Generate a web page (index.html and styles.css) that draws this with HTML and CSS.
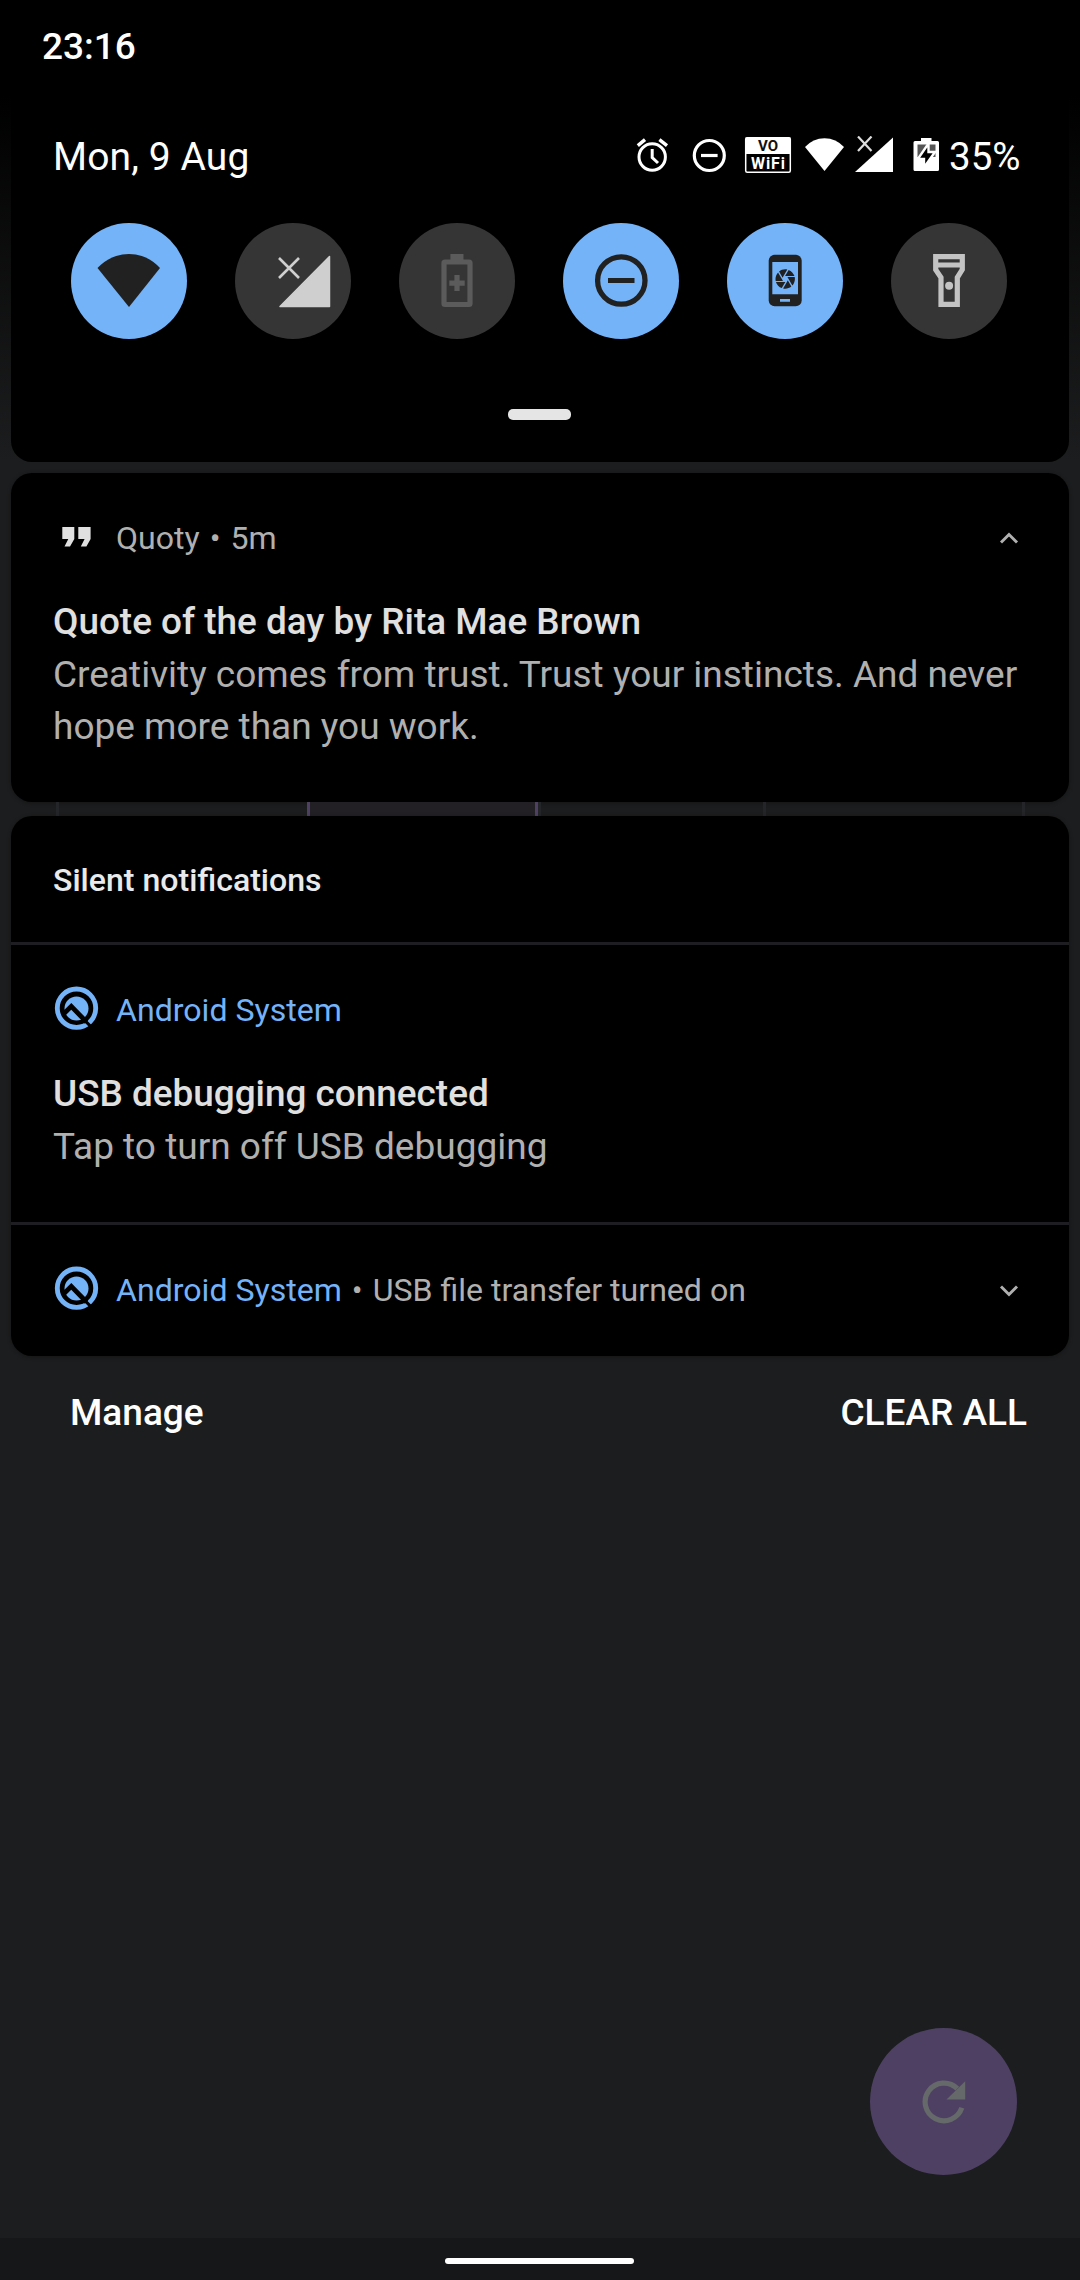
FILE: index.html
```html
<!DOCTYPE html>
<html lang="en">
<head>
<meta charset="utf-8">
<title>Notification shade</title>
<link rel="stylesheet" href="styles.css">
</head>
<body>
<svg class="defs" width="0" height="0">
  <symbol id="android-q" viewBox="0 0 44 46" overflow="visible">
    <circle cx="23.5" cy="21.2" r="19.2" fill="none" stroke="currentColor" stroke-width="4.900"/>
    <circle cx="23.5" cy="21.4" r="12" fill="currentColor"/>
    <path d="M10 27.500L18.300 19.300L33.500 35" fill="none" stroke="#000" stroke-width="4.800"/>
    <path d="M32 33.600L41.500 43.400" stroke="#000" stroke-width="3"/>
  </symbol>
</svg>
<div class="screen">
  <header class="status-bar"><span class="clock">23:16</span></header>

  <section class="quick-settings">
    <div class="qs-header">
      <span class="date">Mon, 9 Aug</span>
      <svg class="status-icons" width="304" height="40" viewBox="636 136 304 40">
        <g fill="none" stroke="#fff">
          <circle cx="652.2" cy="157" r="13.2" stroke-width="3"/>
          <path d="M652.2 149V157.500L658 163" stroke-width="3"/>
          <path d="M637.800 145.600L645 139.600M659.400 139.600L667 145.600" stroke-width="3.400"/>
          <circle cx="709.300" cy="155.500" r="15" stroke-width="3.200"/>
          <path d="M701 155.500H717.600" stroke-width="3.200"/>
        </g>
        <rect x="745.700" y="137.700" width="44.600" height="34.600" rx="1.500" fill="#000" stroke="#fff" stroke-width="1.500"/>
        <path d="M745.600 137.600H790.400V154H745.600Z" fill="#fff"/>
        <text class="vo" x="768" y="151.300" textLength="20">VO</text>
        <text class="wifi-label" x="768" y="169.200" textLength="34">WiFi</text>
        <path d="M824.500 171L805 147Q813 138.200 824.500 138.200Q836 138.200 844 147Z" fill="#fff"/>
        <path d="M858 136.500L871.500 151M871.500 136.500L858 151" stroke="#ddd" stroke-width="2.200"/>
        <path d="M855 172H893V137.500Z" fill="#fff"/>
        <path d="M921 138H931.500V141H937.500Q939 141 939 142.500V169.500Q939 171 937.500 171H915Q913.500 171 913.500 169.500V142.500Q913.500 141 915 141H921Z" fill="#fff"/>
        <path d="M917.500 144.500H935.500V157H917.500Z" fill="#555"/>
        <path d="M928.500 143.500L917.800 159H924V167.500L935 152H928.500Z" fill="#000" stroke="#fff" stroke-width="2.400"/>
      </svg>
      <span class="battery-level">35%</span>
    </div>

    <div class="tiles">
      <svg class="tile on" viewBox="71 223 116 116"><path d="M129 307L97.500 268Q111 254 129 254Q147 254 160 268Z" fill="#212121"/></svg>
      <svg class="tile" viewBox="235 223 116 116">
        <path d="M280 306.500L329.500 306.500V256.500Z" fill="#cfcfcf" stroke="#cfcfcf" stroke-width="1.500" stroke-linejoin="round"/>
        <path d="M279 258L299 278M299 258L279 278" stroke="#cfcfcf" stroke-width="2.600"/>
      </svg>
      <svg class="tile" viewBox="399 223 116 116">
        <rect x="444" y="262" width="26" height="42.500" rx="1" fill="none" stroke="#5b5b5b" stroke-width="5.200"/>
        <path d="M450.400 254H463.500V260H450.400ZM454.400 275H459.600V280.500H464.700V285.800H459.600V291H454.400V285.800H449.300V280.500H454.400Z" fill="#5b5b5b"/>
      </svg>
      <svg class="tile on" viewBox="563 223 116 116">
        <circle cx="621.300" cy="280.500" r="23.700" fill="none" stroke="#212121" stroke-width="5.300"/>
        <path d="M608 280.500H634.500" stroke="#212121" stroke-width="5.200"/>
      </svg>
      <svg class="tile on" viewBox="727 223 116 116">
        <rect x="768.700" y="254.700" width="33" height="51.600" rx="6" fill="#212121"/>
        <path d="M772.300 262H798V294.300H772.300ZM780 299H790V301.800H780Z" fill="#74b3f8"/>
        <path transform="translate(785.200 279) scale(.97) translate(-12 -12)" fill="#212121" d="M9.400 10.500l4.770-8.260C13.470 2.090 12.750 2 12 2c-2.400 0-4.600.85-6.320 2.250l3.660 6.350.06-.1zM21.540 9c-.92-2.920-3.150-5.260-6-6.340L11.880 9h9.660zm.26 1h-7.490l.29.5 4.760 8.250C21 16.970 22 14.610 22 12c0-.69-.07-1.350-.2-2zM8.540 12l-3.900-6.750C3.010 7.030 2 9.390 2 12c0 .69.07 1.350.2 2h7.490l-1.150-2zm-6.080 3c.92 2.920 3.150 5.260 6 6.340L12.120 15H2.460zm11.270 0l-3.900 6.760c.7.15 1.420.24 2.170.24 2.400 0 4.600-.85 6.320-2.250l-3.660-6.350-.93 1.600z"/>
      </svg>
      <svg class="tile" viewBox="891 223 116 116">
        <path d="M935.700 256.600H962.300V269.600L957.300 277.500V304.300H941V277.500L935.700 269.600Z" fill="none" stroke="#c3c3c3" stroke-width="5.200"/>
        <path d="M936 265H962" stroke="#c3c3c3" stroke-width="5.200"/>
        <circle cx="949.100" cy="285.700" r="4" fill="#c3c3c3"/>
      </svg>
    </div>
    <div class="drag-handle"></div>
  </section>

  <article class="card quote">
    <div class="row">
      <svg class="app-icon" viewBox="0 0 44 46"><path d="M9.300 12H21.300V24L17 31.500H11.500L15.300 24H9.300ZM25.300 12H37.600V24L33.400 31.500H27.800L31.600 24H25.300Z" fill="#e0e0e0"/></svg>
      <span class="app">Quoty</span><span class="dot">•</span><span class="app">5m</span>
      <svg class="chevron" viewBox="0 0 20 14"><path d="M2 11.500L10 3.500L18 11.500" fill="none" stroke="#b0b0b0" stroke-width="2.900"/></svg>
    </div>
    <h2 class="title">Quote of the day by Rita Mae Brown</h2>
    <p class="text">Creativity comes from trust. Trust your instincts. And never hope more than you work.</p>
  </article>

  <div class="calendar-strip"><i></i><i class="today"></i><i></i><i></i></div>

  <section class="card silent">
    <h3 class="silent-title">Silent notifications</h3>
    <article class="usb">
      <div class="row">
        <svg class="app-icon system"><use href="#android-q"/></svg>
        <span class="app system">Android System</span>
      </div>
      <h2 class="title">USB debugging connected</h2>
      <p class="text">Tap to turn off USB debugging</p>
    </article>
    <article class="transfer">
      <div class="row">
        <svg class="app-icon system"><use href="#android-q"/></svg>
        <span class="app system">Android System</span><span class="dot">•</span><span class="app">USB file transfer turned on</span>
        <svg class="chevron" viewBox="0 0 20 14"><path d="M2 3.500L10 11.500L18 3.500" fill="none" stroke="#b0b0b0" stroke-width="2.900"/></svg>
      </div>
    </article>
  </section>

  <footer class="actions"><span>Manage</span><span>CLEAR ALL</span></footer>

  <div class="fab">
    <svg width="44" height="44" viewBox="0 0 44 44"><path d="M35.300 8.700A18.800 18.800 0 1 0 39.800 27.800" fill="none" stroke="#656969" stroke-width="5.200"/><path d="M43.200 1.200V19.500H24.500Z" fill="#656969"/></svg>
  </div>

  <nav class="nav-bar"><div class="nav-handle"></div></nav>
</div>
</body>
</html>
```
FILE: styles.css
```css
* { box-sizing: border-box; margin: 0; padding: 0; }
body { background: #1c1d1e; font-family: Roboto, "Liberation Sans", sans-serif; }
.defs { display: block; height: 0; }
.screen {
  width: 1080px; height: 2280px; overflow: hidden;
  display: flex; flex-direction: column;
  background: linear-gradient(#000 0, #000 95px, #1c1d1e 460px, #1c1d1e 100%);
}
.status-bar { height: 92px; padding: 25px 42px 0; }
.clock { display: block; font-size: 37px; line-height: 44px; font-weight: 500; color: #fff; }
.quick-settings {
  height: 370px; margin: 0 11px; background: #000; border-radius: 0 0 21px 21px;
  display: flex; flex-direction: column; align-items: flex-start;
}
.qs-header { display: flex; align-items: center; align-self: stretch; height: 40px; margin-top: 44px; padding: 0 48px 0 42px; color: #fff; line-height: 40px; }
.date { font-size: 39px; padding-top: 1px; letter-spacing: .1px; }
.battery-level { font-size: 38.500px; padding-top: 1px; width: 72px; }
.status-icons { flex: none; margin-left: auto; margin-right: 9px; }
.vo, .wifi-label { font-size: 15px; font-weight: 700; fill: #111; text-anchor: middle; }
.wifi-label { font-size: 16px; fill: #fff; }
.tiles { display: flex; gap: 48px; margin: 47px 0 0 60px; }
.tile { width: 116px; height: 116px; border-radius: 50%; background: #353535; }
.tile.on { background: #74b3f8; }
.drag-handle { width: 63px; height: 11px; border-radius: 5px; background: #e5e5e5; margin: 70px 0 0 497px; }
.card { margin: 0 11px; background: #000; border-radius: 21px; box-shadow: 0 1px 4px rgba(0,0,0,.3); }
.quote { margin-top: 11px; height: 329px; padding: 42px 42px 0; }
.row { display: flex; align-items: center; height: 46px; }
.app-icon { width: 44px; height: 46px; margin-right: 19px; overflow: visible; }
.app, .dot { font-size: 32.100px; line-height: 46px; color: #b0b0b0; white-space: pre; }
.dot { margin: 0 10px; }
.app.system, .app-icon.system { color: #74b3f8; }
.chevron { width: 20px; height: 14px; margin-left: auto; margin-right: 8px; }
.title { font-size: 36.900px; line-height: 52.500px; font-weight: 500; color: #e0e0e0; }
.text { font-size: 37px; line-height: 52.500px; color: #b0b0b0; white-space: nowrap; }
.quote .text { white-space: normal; }
.quote .title, .usb .title { margin-top: 35px; }
.calendar-strip { height: 14px; margin: 0 55px 0 56px; display: grid; grid-template-columns: 251px 231px 225px 1fr; }
.calendar-strip i { border-left: 3px solid #242528; }
.calendar-strip i:last-child { border-right: 3px solid #242528; }
.calendar-strip .today { border-left: 3px solid #4e4063; border-right: 3px solid #4e4063; background: #222025; }
.silent { height: 540px; }
.silent-title { height: 126px; padding-left: 42px; font-size: 32.100px; line-height: 128px; font-weight: 500; color: #e8eaed; }
.usb { height: 280px; border-top: 3px solid #1e1d21; padding: 42px 42px 0; }
.transfer { border-top: 3px solid #1e1d21; padding: 42px 42px 0; }
.actions { display: flex; justify-content: space-between; padding: 35px 53px 0 70px; font-size: 37px; line-height: 44px; font-weight: 500; color: #fff; }
.fab { width: 147px; height: 147px; border-radius: 50%; background: #4e4063; margin: auto 63px 63px auto; display: flex; align-items: center; justify-content: center; flex: none; }
.nav-bar { flex: none; height: 42px; background: #161718; padding: 20px 0 0 445px; }
.nav-handle { width: 189px; height: 6px; border-radius: 3px; background: #fff; }
```
